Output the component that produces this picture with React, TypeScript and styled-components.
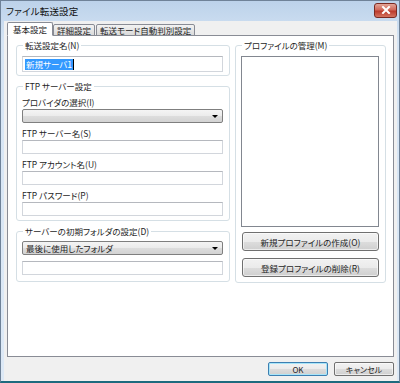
import React, {FC} from 'react';
import styled, {createGlobalStyle} from 'styled-components';

const GlobalStyle = createGlobalStyle`
  html, body {
    margin: 0;
    padding: 0;
    background: #ffffff;
  }
  body {
    font-family: "Noto Sans CJK JP", "Noto Sans", sans-serif;
    font-size: 8.5px;
    font-feature-settings: "palt";
    color: #1e1e1e;
  }
`;

const App: FC = () => {
  return (
    <>
      <GlobalStyle />
      <Window>
        <TitleBar>
          <Title>ファイル転送設定</Title>
          <CloseButton>
            <svg width="10" height="8" viewBox="0 0 10 8">
              <path d="M2 1 L8 7 M8 1 L2 7" stroke="#fff" strokeWidth="2" strokeLinecap="square" />
            </svg>
          </CloseButton>
        </TitleBar>
        <Client>
          <TabStrip>
            <Tab $active>基本設定</Tab>
            <Tab>詳細設定</Tab>
            <Tab>転送モード自動判別設定</Tab>
          </TabStrip>
          <Panel>
            <LeftColumn>
              <Group $pt={6} $pb={3}>
                <Legend>転送設定名(N)</Legend>
                <TextBox $h={16}>
                  <Selected>新規サーバ1</Selected>
                  <Caret />
                </TextBox>
              </Group>
              <Group $pt={6} $pb={4}>
                <Legend>FTP サーバー設定</Legend>
                <Stack $gap={5}>
                  <Field>
                    <FieldLabel>プロバイダの選択(I)</FieldLabel>
                    <Combo>
                      <span />
                      <Arrow />
                    </Combo>
                  </Field>
                  <Field>
                    <FieldLabel>FTP サーバー名(S)</FieldLabel>
                    <TextBox />
                  </Field>
                  <Field>
                    <FieldLabel>FTP アカウント名(U)</FieldLabel>
                    <TextBox />
                  </Field>
                  <Field>
                    <FieldLabel>FTP パスワード(P)</FieldLabel>
                    <TextBox />
                  </Field>
                </Stack>
              </Group>
              <Group $pt={5} $pb={6}>
                <Legend>サーバーの初期フォルダの設定(D)</Legend>
                <Stack $gap={6}>
                  <Combo>
                    <span>最後に使用したフォルダ</span>
                    <Arrow />
                  </Combo>
                  <TextBox />
                </Stack>
              </Group>
            </LeftColumn>
            <RightColumn>
              <Group $pt={6} $pb={5} $pr={5}>
                <Legend>プロファイルの管理(M)</Legend>
                <Stack $gap={5}>
                  <ListBox />
                  <ProfileButtons>
                    <PushButton>新規プロファイルの作成(O)</PushButton>
                    <PushButton>登録プロファイルの削除(R)</PushButton>
                  </ProfileButtons>
                </Stack>
              </Group>
            </RightColumn>
          </Panel>
          <Footer>
            <DialogButton $default>OK</DialogButton>
            <DialogButton>キャンセル</DialogButton>
          </Footer>
        </Client>
      </Window>
    </>
  );
};

export default App;

const Window = styled.div`
  width: 400px;
  height: 383px;
  box-sizing: border-box;
  display: flex;
  flex-direction: column;
  border: 1px solid #6f8298;
  border-bottom: 2px solid #1d6a7e;
  background: linear-gradient(#bcd2ea, #d5e4f4 40px, #dde9f6);
`;

const TitleBar = styled.div`
  height: 20px;
  flex: none;
  display: flex;
  align-items: center;
  justify-content: space-between;
  padding: 0 2px 0 5px;
`;

const Title = styled.div`
  font-size: 9.5px;
  color: #101010;
  letter-spacing: 0.2px;
`;

const CloseButton = styled.div`
  width: 21px;
  height: 13px;
  margin-top: -2px;
  border: 1px solid #7a2a22;
  border-radius: 3px;
  background: linear-gradient(#e3a598, #d0685a 45%, #bb3a2c 55%, #d4735f);
  display: flex;
  align-items: center;
  justify-content: center;
`;

const Client = styled.div`
  flex: 1;
  margin: 0 2px 0 3px;
  background: #f0f0f0;
  padding: 1px 3px 0 3px;
  display: flex;
  flex-direction: column;
`;

const TabStrip = styled.div`
  display: flex;
  align-items: flex-end;
  height: 14px;
  position: relative;
  z-index: 1;
  margin-bottom: -1px;
`;

const Tab = styled.div<{$active?: boolean}>`
  box-sizing: border-box;
  height: ${p => (p.$active ? 14 : 12)}px;
  padding: 0 ${p => (p.$active ? 5 : 3)}px;
  margin-right: ${p => (p.$active ? 0 : 1)}px;
  display: flex;
  align-items: center;
  border: 1px solid #898c95;
  border-bottom-color: ${p => (p.$active ? '#ffffff' : '#898c95')};
  border-radius: 2px 2px 0 0;
  background: ${p => (p.$active ? '#ffffff' : 'linear-gradient(#f3f3f3, #e6e6e6 50%, #dadada)')};
  white-space: nowrap;
`;

const Panel = styled.div`
  height: 322px;
  box-sizing: border-box;
  background: #ffffff;
  border: 1px solid #898c95;
  padding: 4px 6px 0 8px;
  display: grid;
  grid-template-columns: 214px 151px;
  column-gap: 5px;
  align-items: start;
`;

const LeftColumn = styled.div`
  display: flex;
  flex-direction: column;
  gap: 5px;
`;

const RightColumn = styled.div`
  display: flex;
  flex-direction: column;
`;

const Group = styled.fieldset<{$pt: number; $pb: number; $pr?: number}>`
  margin: 0;
  min-inline-size: 0;
  padding: ${p => p.$pt}px ${p => p.$pr ?? 6}px ${p => p.$pb}px 5px;
  border: 1px solid #d5dfe5;
  border-radius: 3px;
`;

const Legend = styled.legend`
  padding: 0 2px;
  margin-left: 1px;
  height: 10px;
  line-height: 10px;
  white-space: nowrap;
`;

const Field = styled.div`
  display: flex;
  flex-direction: column;
  gap: 2px;
`;

const FieldLabel = styled.div`
  height: 10px;
  line-height: 10px;
  white-space: nowrap;
`;

const Stack = styled.div<{$gap: number}>`
  display: flex;
  flex-direction: column;
  gap: ${p => p.$gap}px;
`;

const TextBox = styled.div<{$h?: number}>`
  box-sizing: border-box;
  height: ${p => p.$h ?? 14}px;
  border: 1px solid #d2d6dc;
  border-top-color: #b5b8be;
  background: #ffffff;
  display: flex;
  align-items: center;
  padding-left: 2px;
`;

const Selected = styled.span`
  background: #3399ff;
  color: #ffffff;
  line-height: 11px;
  padding: 0 1px;
`;

const Caret = styled.span`
  width: 1px;
  height: 11px;
  background: #000000;
`;

const Combo = styled.div`
  box-sizing: border-box;
  height: 14px;
  border: 1px solid #7f7f7f;
  border-radius: 2px;
  background: linear-gradient(#f4f4f4, #ebebeb 50%, #dddddd 51%, #d3d3d3);
  display: flex;
  align-items: center;
  justify-content: space-between;
  padding: 0 4px 0 3px;
  white-space: nowrap;
`;

const Arrow = styled.span`
  width: 0;
  height: 0;
  border-left: 3px solid transparent;
  border-right: 3px solid transparent;
  border-top: 3px solid #000000;
`;

const ListBox = styled.div`
  box-sizing: border-box;
  height: 171px;
  margin-right: 1px;
  border: 1px solid #828790;
  background: #ffffff;
`;

const ProfileButtons = styled.div`
  display: flex;
  flex-direction: column;
  gap: 7px;
  padding: 0 1px 0 1px;
`;

const PushButton = styled.div`
  box-sizing: border-box;
  height: 19px;
  border: 1px solid #707070;
  border-radius: 3px;
  background: linear-gradient(#f2f2f2, #ebebeb 50%, #dddddd 51%, #cfcfcf);
  box-shadow: inset 0 0 0 1px rgba(255, 255, 255, 0.6);
  display: flex;
  align-items: center;
  justify-content: center;
  white-space: nowrap;
`;

const Footer = styled.div`
  display: flex;
  justify-content: flex-end;
  gap: 6px;
  padding-top: 5px;
`;

const DialogButton = styled.div<{$default?: boolean}>`
  box-sizing: border-box;
  width: 60px;
  height: 14px;
  border: 1px solid ${p => (p.$default ? '#3c7fb1' : '#707070')};
  border-radius: 2px;
  background: linear-gradient(#f2f2f2, #ebebeb 50%, #dddddd 51%, #cfcfcf);
  box-shadow: ${p => (p.$default ? 'inset 0 0 0 1px #a8e5f9' : 'inset 0 0 0 1px rgba(255,255,255,0.6)')};
  display: flex;
  align-items: center;
  justify-content: center;
  font-size: 8px;
  white-space: nowrap;
`;
